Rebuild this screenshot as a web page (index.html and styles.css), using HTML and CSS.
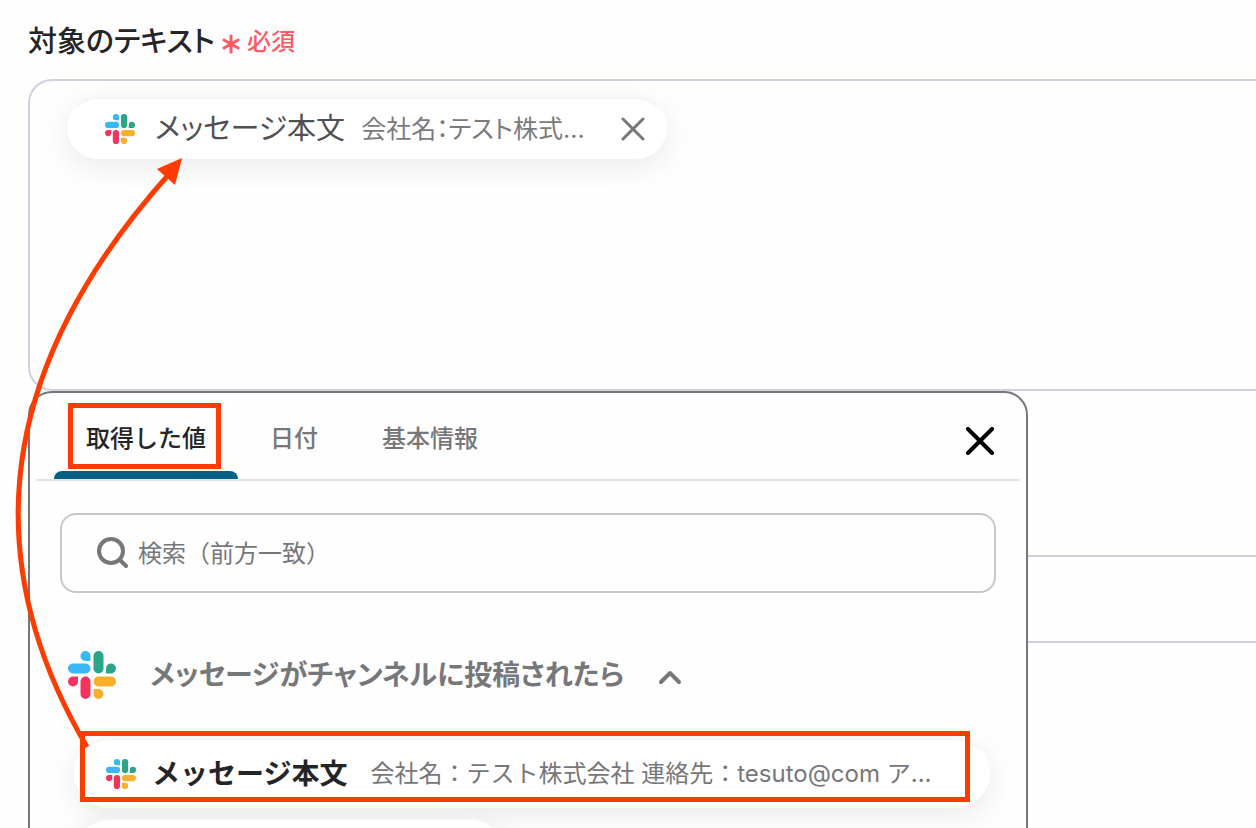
FILE: index.html
```
<!DOCTYPE html>
<html lang="ja">
<head>
<meta charset="UTF-8">
<meta name="viewport" content="width=device-width, initial-scale=1.0">
<title>対象のテキスト</title>
<link rel="stylesheet" href="styles.css">
</head>
<body>

<svg class="symbols" aria-hidden="true">
    <symbol id="slack" viewBox="0 0 48 48">
        <path fill="#36b9f6" d="M17.500 0a5 5 0 0 0 0 10h5V5a5 5 0 0 0-5-5zM5 12.500h12.500a5 5 0 0 1 0 10H5a5 5 0 0 1 0-10z"/>
        <path fill="#2aa588" d="M25.500 5a5 5 0 0 1 10 0v12.500a5 5 0 0 1-10 0zM38 22.500v-5a5 5 0 1 1 5 5z"/>
        <path fill="#f8b02c" d="M43 25.500a5 5 0 0 1 0 10H30.500a5 5 0 0 1 0-10zM25.500 38h5a5 5 0 1 1-5 5z"/>
        <path fill="#f5335f" d="M22.500 43a5 5 0 0 1-10 0V30.500a5 5 0 0 1 10 0zM10 25.500v5a5 5 0 1 1-5-5z"/>
    </symbol>
</svg>

<main class="form">
    <div class="label-row">
        <span class="label" id="target-label">対象のテキスト</span>
        <svg class="asterisk" viewBox="0 0 18 20"><path d="M9 2v16M2 6l14 8M16 6L2 14"/></svg>
        <span class="required">必須</span>
    </div>

    <div class="field">
        <div class="text-area" role="textbox" aria-labelledby="target-label" tabindex="0">
            <span class="chip">
                <svg class="logo-small"><use href="#slack"/></svg>
                <span class="chip-name">メッセージ本文</span>
                <span class="chip-value">会社名：テスト株式...</span>
                <button class="chip-remove" type="button" aria-label="削除">
                    <svg viewBox="0 0 24 24"><path d="M2 2l20 20M22 2L2 22"/></svg>
                </button>
            </span>
        </div>

        <section class="picker">
            <div class="tabs">
                <button class="tab active" type="button">取得した値</button>
                <button class="tab" type="button">日付</button>
                <button class="tab" type="button">基本情報</button>
                <button class="close" type="button" aria-label="閉じる">
                    <svg viewBox="0 0 28 28"><path d="M2 2l24 24M26 2L2 26"/></svg>
                </button>
            </div>
            <label class="search">
                <svg viewBox="0 0 32 32"><circle cx="15" cy="14" r="12"/><path d="M24 23l6 6"/></svg>
                <input type="text" placeholder="検索（前方一致）" aria-label="検索">
            </label>
            <button class="group" type="button">
                <svg class="logo-large"><use href="#slack"/></svg>
                <span>メッセージがチャンネルに投稿されたら</span>
                <svg class="chevron" viewBox="0 0 24 16"><path d="M3 13l9-9 9 9"/></svg>
            </button>
            <div class="items">
                <button class="item" type="button">
                    <svg class="logo-small"><use href="#slack"/></svg>
                    <span class="item-name">メッセージ本文</span>
                    <span class="item-value">会社名：テスト株式会社 連絡先：tesuto@com ア...</span>
                </button>
                <button class="item item-next" type="button" aria-label="次の項目"></button>
            </div>
        </section>
    </div>

    <div class="next-field"></div>
</main>

<!-- guide marks: arrow from the item to the chip, boxes round the tab and the item -->
<svg class="marks" width="1000" height="828" aria-hidden="true">
    <path class="mark-line" d="M87 747Q-84 456 170 173"/>
    <path class="mark-head" d="M182 158l-25 11 18 16z"/>
    <rect class="mark-line" x="70.500" y="405.500" width="148" height="61"/>
    <rect class="mark-line" x="82.500" y="733.500" width="885" height="66"/>
</svg>

</body>
</html>
```
FILE: styles.css
```
* {
    box-sizing: border-box;
}
body {
    margin: 0;
    height: 100vh;
    overflow: hidden;
    position: relative;
    background: #fefefe;
    color: #252528;
    font-family: Inter, "Noto Sans CJK JP", sans-serif;
    font-size: 24px;
    line-height: 36px;
}
button {
    padding: 0;
    border: 0;
    background: none;
    color: inherit;
    font: inherit;
    cursor: pointer;
}
svg {
    display: block;
    flex: none;
    fill: none;
    stroke-linecap: round;
    stroke-linejoin: round;
}
.symbols {
    position: absolute;
    width: 0;
    height: 0;
}
.form {
    padding: 24px 0 0 28px;
}
.label-row {
    display: flex;
    align-items: center;
    height: 36px;
    margin-bottom: 19px;
}
.label {
    font-size: 29px;
    font-weight: 500;
    font-feature-settings: "palt";
}
.asterisk {
    width: 18px;
    height: 20px;
    margin: 4px 7px 0 7px;
    stroke: #ff5a64;
    stroke-width: 3;
}
.required {
    color: #ff5a64;
    font-weight: 500;
}

/* text area with the inserted value */
.field {
    position: relative;
}
.text-area {
    height: 312px;
    padding: 16px 37px;
    border: 2px solid #cdd2de;
    border-right: 0;
    border-radius: 24px 0 0 24px;
}
.chip {
    display: inline-flex;
    align-items: center;
    height: 62px;
    padding: 2px 20px 0 36px;
    border: 2px solid #fff;
    border-top-color: #f6f4f7;
    border-radius: 31px;
    background: #fff;
    box-shadow: 0 8px 28px rgba(60, 40, 60, 0.09);
    font-feature-settings: "palt";
}
.logo-small {
    width: 30px;
    height: 30px;
}
.chip-name {
    margin: 0 16px 0 20px;
    color: #505055;
    font-size: 29px;
}
.chip-value {
    color: #7b7b7e;
    font-size: 25px;
}
.chip-remove {
    margin-left: 36px;
}
.chip-remove svg {
    width: 24px;
    height: 24px;
    stroke: #77777a;
    stroke-width: 3;
}
.next-field {
    height: 88px;
    margin-top: 164px;
    border: 2px solid #cdd2de;
    border-right: 0;
}

/* value picker, opens over the form */
.picker {
    position: absolute;
    top: 312px;
    left: 0;
    width: 1000px;
    max-width: 100%;
    padding-bottom: 32px;
    border: 2px solid #77777a;
    border-radius: 24px;
    background: #fefefe;
    color: #77777a;
}
.tabs {
    display: flex;
    height: 88px;
    margin: 0 6px;
    padding-left: 18px;
    border-bottom: 2px solid #e4e4e6;
}
.tab {
    position: relative;
    padding: 6px 32px 0;
    font-weight: 500;
}
.active {
    color: #252528;
}
.active::after {
    content: "";
    position: absolute;
    bottom: 0;
    left: 0;
    width: 100%;
    height: 8px;
    border-radius: 8px 8px 0 0;
    background: #045f84;
}
.close {
    margin: 10px 26px 0 auto;
}
.close svg {
    width: 28px;
    height: 28px;
    stroke: #000;
    stroke-width: 4;
}
.search {
    display: flex;
    align-items: center;
    gap: 10px;
    height: 80px;
    margin: 32px 30px 0;
    padding: 0 34px;
    border: 2px solid #c8c8ca;
    border-radius: 16px;
}
.search svg {
    width: 32px;
    height: 32px;
    stroke: #77777a;
    stroke-width: 4;
}
.search input {
    flex: 1;
    min-width: 0;
    padding: 2px 0 0;
    border: 0;
    outline: 0;
    background: none;
    color: inherit;
    font: inherit;
}
.search input::placeholder {
    color: #77777a;
    opacity: 1;
}
.group {
    display: flex;
    align-items: center;
    height: 48px;
    margin: 58px 38px 0;
    font-size: 28px;
    font-weight: 700;
    font-feature-settings: "palt";
}
.logo-large {
    width: 48px;
    height: 48px;
    margin-right: 34px;
}
.chevron {
    width: 24px;
    height: 16px;
    margin: 4px 0 0 34px;
    stroke: #77777a;
    stroke-width: 4;
}
.items {
    display: flex;
    flex-direction: column;
    gap: 10px;
    margin: 39px 36px 0 44px;
}
.item {
    display: flex;
    align-items: center;
    height: 70px;
    padding: 2px 30px 0;
    border: 2px solid #fff;
    border-top-color: #f6f4f7;
    border-radius: 35px;
    background: #fff;
    box-shadow: 0 8px 28px rgba(60, 40, 60, 0.09);
    white-space: nowrap;
}
.item-next {
    width: 432px;
}
.item-name {
    margin: 0 23px 0 16px;
    color: #252528;
    font-size: 28px;
    font-weight: 700;
}

/* guide marks drawn over the page */
.marks {
    position: absolute;
    top: 0;
    left: 0;
    pointer-events: none;
}
.mark-line {
    stroke: #ff3b00;
    stroke-width: 5;
    stroke-linecap: butt;
    stroke-linejoin: miter;
}
.mark-head {
    fill: #ff3b00;
}
```
